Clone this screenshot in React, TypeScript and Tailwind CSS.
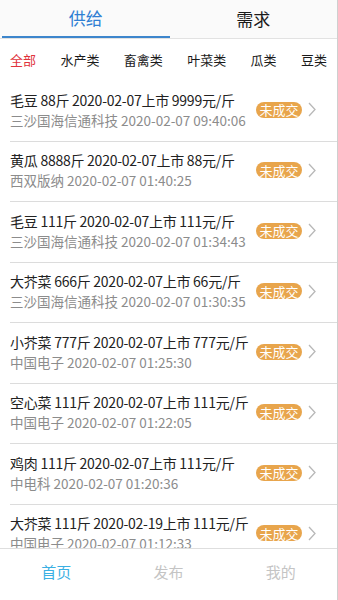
type Row = { title: string; sub: string };

const CATEGORIES = ['全部', '水产类', '畜禽类', '叶菜类', '瓜类', '豆类'];

const ROWS: Row[] = [
  { title: '毛豆 88斤 2020-02-07上市 9999元/斤', sub: '三沙国海信通科技 2020-02-07 09:40:06' },
  { title: '黄瓜 8888斤 2020-02-07上市 88元/斤', sub: '西双版纳 2020-02-07 01:40:25' },
  { title: '毛豆 111斤 2020-02-07上市 111元/斤', sub: '三沙国海信通科技 2020-02-07 01:34:43' },
  { title: '大芥菜 666斤 2020-02-07上市 66元/斤', sub: '三沙国海信通科技 2020-02-07 01:30:35' },
  { title: '小芥菜 777斤 2020-02-07上市 777元/斤', sub: '中国电子 2020-02-07 01:25:30' },
  { title: '空心菜 111斤 2020-02-07上市 111元/斤', sub: '中国电子 2020-02-07 01:22:05' },
  { title: '鸡肉 111斤 2020-02-07上市 111元/斤', sub: '中电科 2020-02-07 01:20:36' },
  { title: '大芥菜 111斤 2020-02-19上市 111元/斤', sub: '中国电子 2020-02-07 01:12:33' },
];

function Chevron() {
  return (
    <svg width="8" height="15" viewBox="0 0 8 15" className="shrink-0 ml-[6px]">
      <polyline points="1,1 7,7.5 1,14" fill="none" stroke="#b8b8b8" strokeWidth="1.3" />
    </svg>
  );
}

export default function App() {
  return (
    <div
      className="w-[338px] h-[600px] flex flex-col bg-white border-r border-[#cfcfcf] overflow-hidden"
      style={{ fontFamily: '"Noto Sans CJK SC", "Noto Sans", sans-serif' }}
    >
      <div className="flex h-[39px] bg-[#fafafa] border-b border-[#e2e2e2] shrink-0">
        <div className="flex-1 flex items-center justify-center text-[17px] text-[#2f7fd3] border-b-2 border-[#3d86cc] ml-[2px]">
          供给
        </div>
        <div className="flex-1 flex items-center justify-center text-[17px] text-[#1a1a1a]">需求</div>
      </div>
      <div className="flex justify-between items-center h-[42px] px-[10px] text-[13px] shrink-0">
        {CATEGORIES.map((c, i) => (
          <span key={c} className={i === 0 ? 'text-[#e0333c]' : 'text-[#1a1a1a]'}>
            {c}
          </span>
        ))}
      </div>
      <div className="flex-1 overflow-hidden">
        {ROWS.map((r, i) => (
          <div
            key={i}
            className="h-[60.5px] flex items-center ml-[10px] pr-[21px] pb-[2px] border-b border-[#dcdcdc]"
          >
            <div className="flex-1 min-w-0 leading-none">
              <div className="text-[14px] text-[#222] whitespace-nowrap tracking-[-0.25px]">{r.title}</div>
              <div className="text-[13.5px] text-[#8c8c8c] whitespace-nowrap mt-[7px]">{r.sub}</div>
            </div>
            <span className="shrink-0 ml-[4px] w-[46px] h-[16px] flex items-center justify-center bg-[#e8a54c] text-white text-[13px] leading-none rounded-full">
              未成交
            </span>
            <Chevron />
          </div>
        ))}
      </div>
      <div className="h-[52px] flex items-center pb-[4px] border-t border-[#dedede] shrink-0 text-[15px]">
        <div className="flex-1 text-center text-[#3bb0e3]">首页</div>
        <div className="flex-1 text-center text-[#c4c4c4]">发布</div>
        <div className="flex-1 text-center text-[#c4c4c4]">我的</div>
      </div>
    </div>
  );
}
